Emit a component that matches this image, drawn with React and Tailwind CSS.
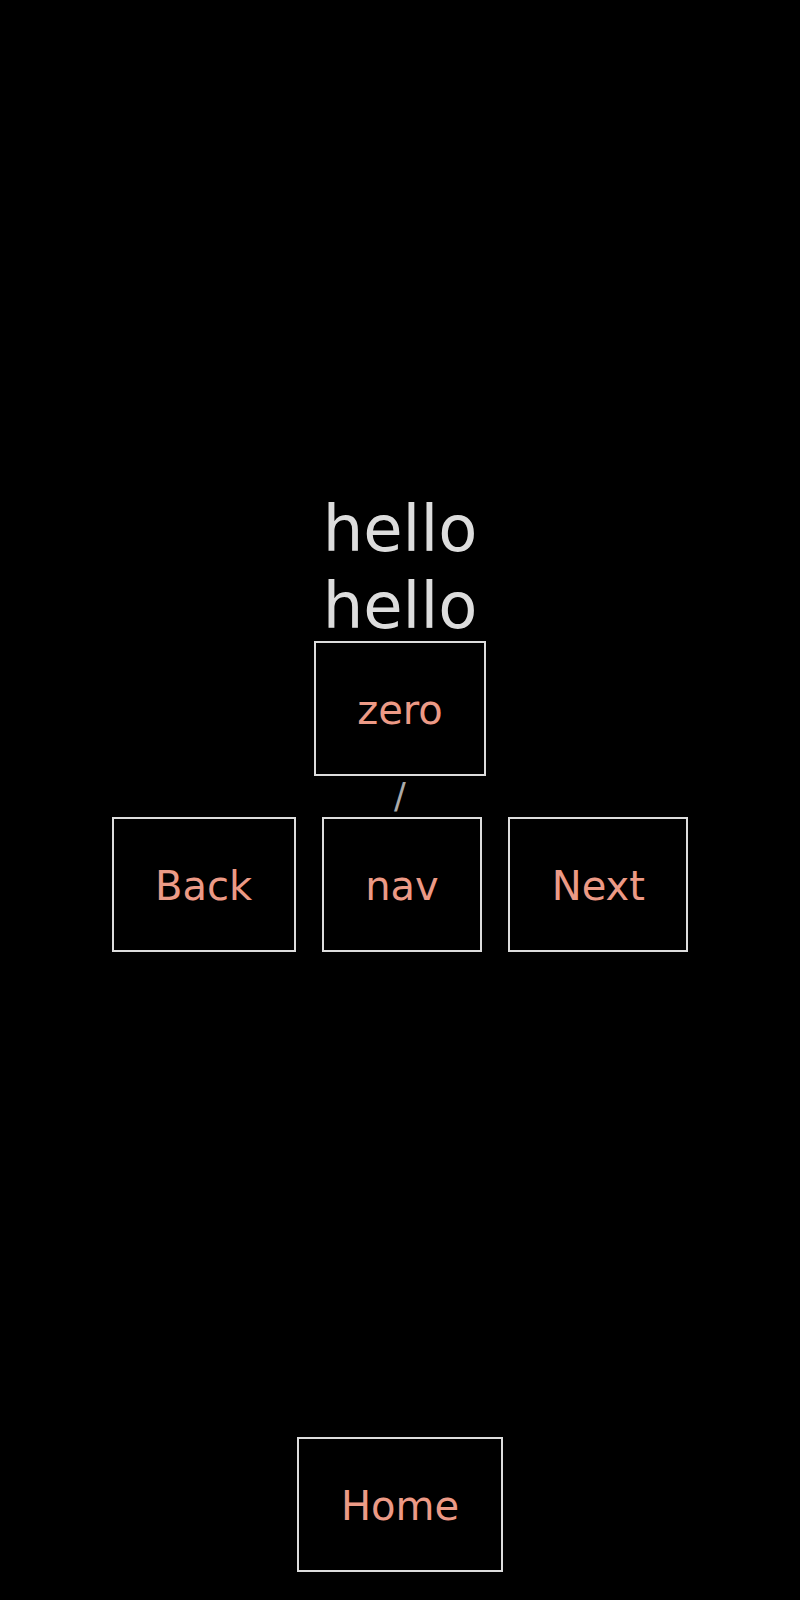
import React from "react";

const box =
  "border-2 border-[#dddddd] bg-black px-[41.5px] pt-[44px] pb-[40px] text-[40px] leading-[47px] text-[#ec9a86]";

export default function App() {
  return (
    <div
      className="flex h-[1600px] flex-col bg-black"
      style={{ fontFamily: '"DejaVu Sans", Verdana, sans-serif' }}
    >
      <main className="flex flex-1 flex-col items-center justify-center pt-[6px]">
        <h1 className="text-center text-[64px] font-normal leading-[77px] text-[#dddddd]">
          hello
          <br />
          hello
        </h1>
        <button className={`${box} mt-[-4px]`}>zero</button>
        <span className="text-[35px] leading-[41px] text-[#aaaaaa]">/</span>
        <nav className="flex gap-[26px]">
          <button className={box}>Back</button>
          <button className={box}>nav</button>
          <button className={box}>Next</button>
        </nav>
      </main>

      <div className="mb-[28px] flex justify-center">
        <button className={box}>Home</button>
      </div>
    </div>
  );
}
